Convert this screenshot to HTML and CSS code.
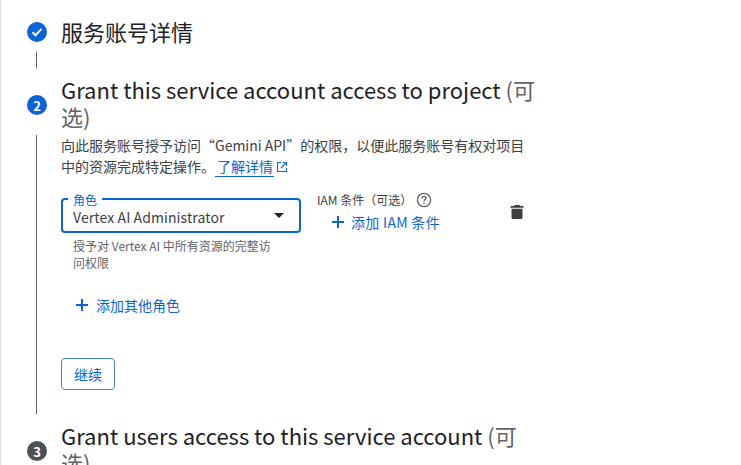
FILE: index.html
```html
<!DOCTYPE html>
<html lang="zh-CN">
<head>
    <meta charset="UTF-8">
    <title>创建服务账号</title>
    <link rel="stylesheet" href="styles.css">
</head>
<body>
    <div class="stepper">
        <div class="step-head">
            <span class="step-icon done">
                <svg width="12" height="12" viewBox="0 0 12 12"><path d="M1.5 6.300l3 3 6-6.400" fill="none" stroke="#fff" stroke-width="2"/></svg>
            </span>
            <h2 class="step-title">服务账号详情</h2>
        </div>
        <div class="connector short"></div>

        <div class="step-head">
            <span class="step-icon active">2</span>
            <h2 class="step-title">Grant this service account access to project <span class="optional">(可选)</span></h2>
        </div>
        <div class="connector main">
            <p class="desc">向此服务账号授予访问“Gemini API”的权限，以便此服务账号有权对项目中的资源完成特定操作。<a class="learn" href="#">了解详情</a><svg class="ext" width="12" height="12" viewBox="0 0 12 12"><path d="M5 1.500H1.500v9h9V7M7 1.500h3.500V5M10.300 1.700L5 7" fill="none" stroke="#0a63d8" stroke-width="1.100"/></svg></p>

            <div class="role-row">
                <div class="role-col">
                    <div class="select">
                        <span class="select-label">角色</span>
                        <span class="select-value">Vertex AI Administrator</span>
                        <span class="arrow"></span>
                    </div>
                    <p class="hint">授予对 Vertex AI 中所有资源的完整访问权限</p>
                </div>
                <div class="iam-col">
                    <div class="iam-label">IAM 条件（可选）
                        <svg class="help" width="16" height="16" viewBox="0 0 16 16"><circle cx="8" cy="8" r="6.600" fill="none" stroke="#5f6368" stroke-width="1.300"/><path d="M5.900 6.300c0-1.200.9-2 2.100-2s2.100.8 2.100 1.900c0 1.500-2.100 1.600-2.100 3.200" fill="none" stroke="#5f6368" stroke-width="1.300"/><circle cx="8" cy="11.300" r=".85" fill="#5f6368"/></svg>
                    </div>
                    <a class="add-link iam-add" href="#"><svg width="14" height="14" viewBox="0 0 14 14"><path d="M7 1v12M1 7h12" stroke="#0a63d8" stroke-width="2"/></svg>添加 IAM 条件</a>
                </div>
                <svg class="trash" width="14" height="16" viewBox="0 0 14 16"><path d="M4.600 1h4.800l.7 1H13.500v1.700H.5V2h3.400zM1.500 4.700h11V13.500c0 .9-.7 1.500-1.500 1.500H3c-.8 0-1.500-.6-1.500-1.500z" fill="#3c4043"/></svg>
            </div>

            <a class="add-link add-role" href="#"><svg width="14" height="14" viewBox="0 0 14 14"><path d="M7 1v12M1 7h12" stroke="#0a63d8" stroke-width="2"/></svg>添加其他角色</a>

            <button class="continue">继续</button>
        </div>

        <div class="step-head">
            <span class="step-icon todo">3</span>
            <h2 class="step-title">Grant users access to this service account <span class="optional">(可选)</span></h2>
        </div>
    </div>
</body>
</html>
```

FILE: styles.css
```css
html, body {
    height: 465px;
    overflow: hidden;
}
body {
    margin: 0;
    background-color: #fff;
    color: #202124;
    font-family: "Noto Sans CJK SC", "Noto Sans", sans-serif;
}
.stepper {
    box-sizing: border-box;
    height: 465px;
    overflow: hidden;
    width: 600px;
    padding: 18px 0 0 26px;
    border-left: 2px solid #dadce0;
    margin-left: -1px;
}
.step-head {
    display: flex;
    align-items: center;
    gap: 14px;
}
.step-icon {
    flex: none;
    width: 20px;
    height: 20px;
    border-radius: 50%;
    display: flex;
    align-items: center;
    justify-content: center;
    color: #fff;
    font-size: 13px;
    font-weight: 700;
}
.done, .active { background-color: #0a63d8; }
.active, .todo { margin-top: 4px; }
.todo { background-color: #4d5054; }
.step-title {
    margin: 0;
    font-size: 22px;
    font-weight: 400;
    line-height: 27px;
    width: 475px;
    color: #202124;
}
.optional { color: #5f6368; }
.connector {
    margin-left: 9px;
    border-left: 1px solid #5f6368;
    padding-left: 24px;
}
.connector.short {
    height: 16px;
    margin: 7px 0 8px 9px;
}
.connector.main {
    margin: 6px 0 8px 9px;
    padding-bottom: 24px;
}
.desc {
    margin: -1px 0 0;
    width: 475px;
    font-size: 14px;
    line-height: 21px;
    color: #3c4043;
}
.learn {
    color: #0a63d8;
    text-decoration: none;
    border-bottom: 1px solid #0a63d8;
    padding: 0 1px 0 2px;
}
.ext {
    margin-left: 2px;
    vertical-align: -1px;
}
.role-row {
    display: flex;
    margin-top: 21px;
}
.role-col { width: 240px; }
.select {
    position: relative;
    box-sizing: border-box;
    height: 35px;
    border: 2px solid #0a63d8;
    border-radius: 4px;
    padding: 3px 10px 0;
    font-size: 14px;
    line-height: 20px;
    letter-spacing: .1px;
    color: #3c4043;
    display: flex;
    align-items: center;
}
.select-label {
    position: absolute;
    top: -6px;
    left: 5px;
    padding: 0 5px;
    background-color: #fff;
    color: #0a63d8;
    font-size: 12px;
    line-height: 12px;
    letter-spacing: 0;
}
.arrow {
    position: absolute;
    right: 15px;
    top: 13px;
    border-style: solid;
    border-width: 5px 5px 0;
    border-color: #202124 transparent transparent;
}
.hint {
    margin: 4px 0 0 12px;
    width: 205px;
    font-size: 12px;
    line-height: 17px;
    color: #5f6368;
}
.iam-col {
    margin-left: 16px;
    width: 193px;
}
.iam-label {
    display: flex;
    align-items: center;
    margin-top: -7px;
    gap: 4px;
    font-size: 12px;
    line-height: 18px;
    color: #3c4043;
}
.add-link {
    display: flex;
    align-items: center;
    gap: 7px;
    color: #0a63d8;
    text-decoration: none;
    font-size: 14px;
    line-height: 20px;
}
.iam-add {
    margin: 3px 0 0 14px;
    gap: 6px;
    letter-spacing: .3px;
}
.trash {
    margin-top: 6px;
}
.add-role {
    margin: 24px 0 0 14px;
}
.continue {
    display: block;
    margin-top: 43px;
    width: 54px;
    height: 32px;
    padding: 0;
    background-color: #fff;
    color: #0a63d8;
    border: 1px solid #4a7fd0;
    border-radius: 4px;
    font-family: inherit;
    font-size: 14px;
}
```
